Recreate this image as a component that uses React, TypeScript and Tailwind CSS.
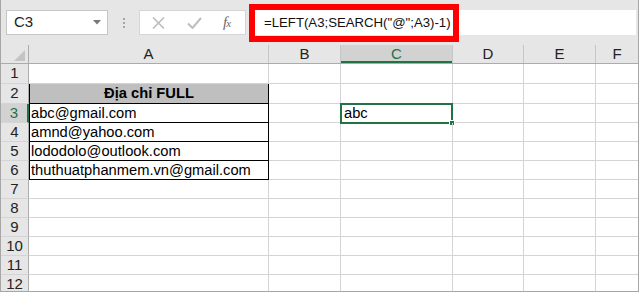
import React from "react";

const font = { fontFamily: '"Liberation Sans", Arial, sans-serif' };

const cols = [
  { id: "A", w: "w-[240px]" },
  { id: "B", w: "w-[72px]" },
  { id: "C", w: "w-[112px]" },
  { id: "D", w: "w-[71px]" },
  { id: "E", w: "w-[72px]" },
];

const data: Record<number, string> = {
  3: "abc@gmail.com",
  4: "amnd@yahoo.com",
  5: "lododolo@outlook.com",
  6: "thuthuatphanmem.vn@gmail.com",
};

const rowHeight = (r: number) => (r <= 2 ? "h-[20px]" : "h-[19px]");

function FormulaBar() {
  return (
    <div className="relative h-[45px] flex items-start pt-[10px] pl-[5px] pr-[2px]">
      {/* Name box */}
      <div className="w-[102px] h-[25px] bg-white border border-[#c6c6c6] flex items-center justify-between pl-[7px] pr-[6px]">
        <span className="text-[15px] text-[#222]">C3</span>
        <svg width="8" height="5" viewBox="0 0 8 5">
          <path d="M0 0 H8 L4 4.5 Z" fill="#777" />
        </svg>
      </div>
      {/* dots */}
      <div className="w-[31px] h-[25px] flex flex-col items-center justify-center gap-[2px]">
        <div className="w-[2px] h-[2px] bg-[#a6a6a6]" />
        <div className="w-[2px] h-[2px] bg-[#a6a6a6]" />
        <div className="w-[2px] h-[2px] bg-[#a6a6a6]" />
      </div>
      {/* buttons */}
      <div className="w-[107px] h-[25px] bg-white border border-[#d6d6d6] flex items-center">
        <svg className="ml-[12px]" width="13" height="12" viewBox="0 0 13 12">
          <path d="M1 0.5 L12 11.5 M12 0.5 L1 11.5" stroke="#bdbdbd" strokeWidth="1.6" />
        </svg>
        <svg className="ml-[22px]" width="15" height="12" viewBox="0 0 15 12">
          <path d="M1 6.5 L5.5 11 L14 1" stroke="#bdbdbd" strokeWidth="2" fill="none" />
        </svg>
        <span
          className="ml-[21px] text-[15px] italic text-[#6a6a6a] tracking-[-1px]"
          style={{ fontFamily: '"Liberation Serif", serif' }}
        >
          f<span className="text-[11px]">x</span>
        </span>
      </div>
      {/* formula input */}
      <div className="ml-[5px] flex-1 h-[25px] bg-white flex items-center pl-[13px]">
        <span className="text-[13.2px] text-[#111]" style={font}>
          =LEFT(A3;SEARCH("@";A3)-1)
        </span>
      </div>
      {/* red highlight */}
      <div className="absolute left-[248px] top-[4px] w-[210px] h-[38px] border-[6px] border-[#ff0000]" />
    </div>
  );
}

function HeaderRow() {
  return (
    <div className="flex h-[19px] border-b border-[#ababab]">
      <div className="w-[28px] shrink-0 border-r border-[#ababab] relative">
        <svg className="absolute right-[3px] bottom-[2px]" width="11" height="11" viewBox="0 0 11 11">
          <path d="M11 0 V11 H0 Z" fill="#c4c4c4" />
        </svg>
      </div>
      {cols.map((c) => (
        <div
          key={c.id}
          className={`${c.w} shrink-0 flex items-center justify-center text-[15px] border-r ${
            c.id === "C"
              ? "bg-[#d2d2d2] text-[#217346] border-[#c6c6c6] shadow-[inset_0_-2px_0_#217346]"
              : "text-[#222] border-[#c6c6c6]"
          }`}
        >
          {c.id}
        </div>
      ))}
      <div className="flex-1 flex items-center justify-center text-[15px] text-[#222]">F</div>
    </div>
  );
}

function Row({ r }: { r: number }) {
  const inTable = r >= 2 && r <= 6;
  return (
    <div className={`flex ${rowHeight(r)} shrink-0`}>
      <div
        className={`w-[28px] shrink-0 flex items-center justify-center text-[15px] border-b border-[#d4d4d4] ${
          r === 3
            ? "text-[#217346] bg-[#d2d2d2] border-r-2 border-r-[#217346]"
            : "text-[#222] bg-[#e6e6e6] border-r border-r-[#ababab]"
        }`}
      >
        {r}
      </div>
      {/* Column A */}
      <div
        className={`w-[240px] shrink-0 flex items-center text-[14.7px] text-black ${
          inTable ? "border-r border-b border-l border-black" : "border-r border-b border-[#d4d4d4]"
        } ${r === 2 ? "bg-[#bfbfbf] justify-center font-bold" : "pl-[1px]"}`}
      >
        {r === 2 ? "Địa chỉ FULL" : data[r] ?? ""}
      </div>
      {/* B */}
      <div className="w-[72px] shrink-0 border-r border-b border-[#d4d4d4]" />
      {/* C */}
      <div className="w-[112px] shrink-0 border-r border-b border-[#d4d4d4] relative">
        {r === 3 && (
          <div className="absolute -left-[1px] -top-[1px] w-[113px] h-[21px] border-2 border-[#217346] flex items-center pl-[2px] text-[14.7px] text-black bg-white">
            abc
            <div className="absolute -right-[4px] -bottom-[4px] w-[6px] h-[6px] bg-[#217346] border border-white" />
          </div>
        )}
      </div>
      {/* D */}
      <div className="w-[71px] shrink-0 border-r border-b border-[#d4d4d4]" />
      {/* E */}
      <div className="w-[72px] shrink-0 border-r border-b border-[#d4d4d4]" />
      {/* F */}
      <div className="flex-1 border-b border-[#d4d4d4]" />
    </div>
  );
}

export default function App() {
  return (
    <div
      className="w-[639px] h-[292px] bg-[#e6e6e6] border-l border-r border-b border-[#a6a6a6] overflow-hidden flex flex-col"
      style={font}
    >
      <FormulaBar />
      <HeaderRow />
      <div className="flex-1 overflow-hidden bg-white flex flex-col">
        {Array.from({ length: 12 }, (_, i) => (
          <Row key={i} r={i + 1} />
        ))}
      </div>
    </div>
  );
}
